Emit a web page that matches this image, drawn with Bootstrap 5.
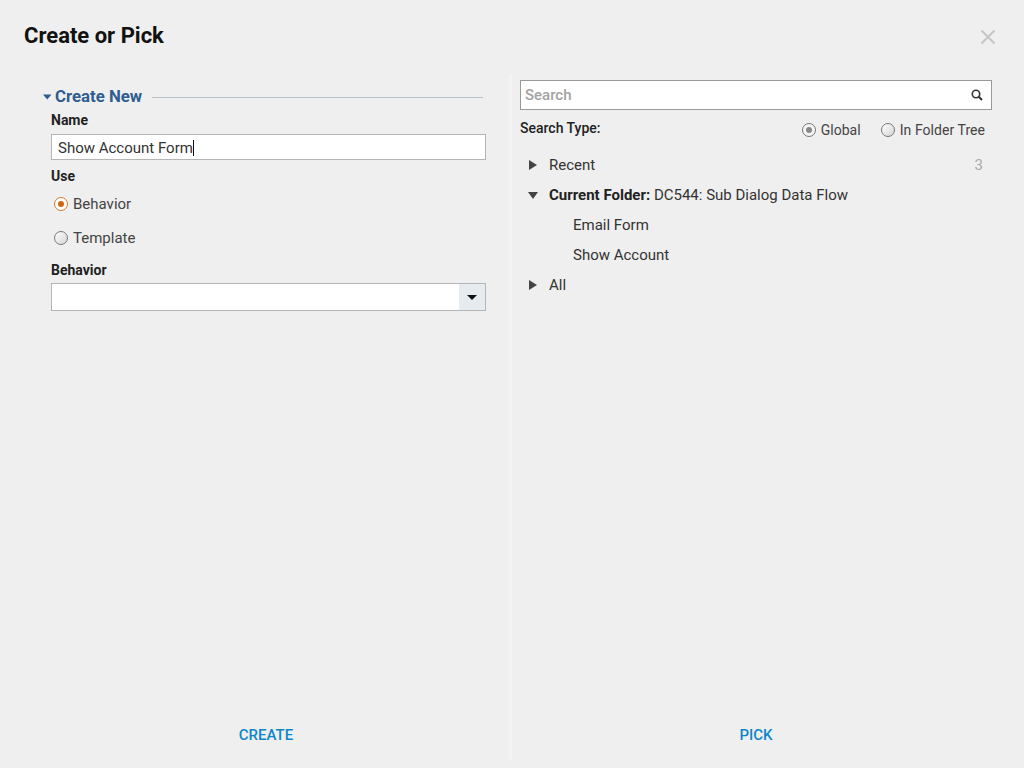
<!DOCTYPE html>
<html lang="en">
<head>
<meta charset="utf-8">
<title>Create or Pick</title>
<link rel="stylesheet" href="https://cdn.jsdelivr.net/npm/bootstrap@5.3.0/dist/css/bootstrap.min.css">
<style>
html,body{height:768px;overflow:hidden}
body{background:#efefef;font-family:Roboto,"Liberation Sans",sans-serif;font-size:14px;color:#333}
.dlg-head{height:74px;padding:23px 0 0 24px;position:relative}
.dlg-title{font-size:22px;font-weight:700;line-height:26px;color:#111;margin:0}
.dlg-close{position:absolute;left:980px;top:29px;width:16px;height:16px;display:block}
.dlg-body{height:686px}
.pane-left{width:509px;padding:13px 26px 0 43px}
.pane-split{width:3px;background:#f3f3f3}
.pane-right{width:512px;padding:6px 32px 0 8px}
.sec-head{height:20px;gap:3px}
.sec-title{font-size:16.800px;font-weight:700;color:#2f5d8f;line-height:18px;padding-bottom:2px;white-space:nowrap}
.sec-rule{height:1px;background:#bcc4cb;margin-left:7px}
.form-area{padding-left:8px;margin-right:-3px}
.fld-label{font-weight:700;font-size:14px;line-height:16px;color:#222;display:block}
.fld-first{margin-top:5px}
.fld-last{margin-top:7px}
.txt-box{height:26px;border:1px solid #b5b5b5;background:#fff;font-size:15px;line-height:24px;padding:1px 6px 0;color:#333;margin-top:6px}
.caret-bar{display:inline-block;width:1px;height:16px;background:#111;vertical-align:-3px}
.radio-row{height:34px;gap:5px;font-size:15px;color:#444;line-height:20px;padding-left:3px}
.radio-first{margin-top:3px}
.radio-dot{width:14px;height:14px;border-radius:50%;border:1px solid #777;background:linear-gradient(135deg,#fff,#d4d4d4);display:inline-flex;align-items:center;justify-content:center;flex:none}
.radio-dot.on-orange{border-color:#d9782a;background:#fff}
.radio-dot.on-orange::after{content:"";width:6px;height:6px;border-radius:50%;background:#d2660f}
.radio-dot.on-grey{background:#f4f4f4}
.radio-dot.on-grey::after{content:"";width:6px;height:6px;border-radius:50%;background:#888}
.combo{height:28px;border:1px solid #b5b5b5;background:#fff;margin-top:5px}
.combo-btn{width:26px;background:#e6ebef}
.tri-down{width:0;height:0;border-left:5px solid transparent;border-right:5px solid transparent;border-top:5px solid #111}
.search-box{height:30px;border:1px solid #999;background:#fff;padding:0 8px 0 4px}
.search-ph{font-weight:500;color:#a3a3a3;font-size:15px;line-height:28px}
.type-row{height:40px;padding-top:10px}
.type-label{font-size:14px;font-weight:500;color:#222;line-height:16px}
.type-opts{gap:20px;padding-right:7px}
.type-opt{gap:5px;font-size:14px;color:#444;line-height:20px;letter-spacing:.05px}
.tree-row{height:30px;font-size:15px;color:#333;line-height:20px}
.tree-arrow{width:29px;flex:none;padding-left:8px}
.ar-right{display:block;width:0;height:0;border-top:5px solid transparent;border-bottom:5px solid transparent;border-left:8px solid #444;margin-left:1px}
.ar-down{display:block;width:0;height:0;border-left:5.5px solid transparent;border-right:5.5px solid transparent;border-top:7px solid #444}
.tree-leaf{padding-left:53px}
.tree-count{color:#aaa;padding-right:9px}
.tree-strong{font-weight:700;color:#222}
.dlg-action{font-size:15px;font-weight:500;color:#0b87c9;text-decoration:none;line-height:16px}
.dlg-foot{height:0;position:relative}
.foot-link{position:absolute;top:-33px;transform:translateX(-50%)}
</style>
</head>
<body>
<div class="dlg-head">
  <h1 class="dlg-title">Create or Pick</h1>
  <svg class="dlg-close" viewBox="0 0 16 16" aria-label="Close"><path d="M1.500 1.500L14.500 14.500M14.500 1.500L1.500 14.500" stroke="#c6c6c6" stroke-width="2" fill="none"/></svg>
</div>
<div class="dlg-body d-flex">
  <div class="pane-left">
    <div class="sec-head d-flex align-items-center">
      <svg width="9" height="6" viewBox="0 0 9 6" class="flex-none"><path d="M0 .5H8.500L4.250 5.500Z" fill="#2f5d8f"/></svg>
      <span class="sec-title">Create New</span>
      <div class="sec-rule flex-grow-1"></div>
    </div>
    <div class="form-area">
      <label class="fld-label fld-first">Name</label>
      <div class="txt-box">Show Account Form<span class="caret-bar"></span></div>
      <label class="fld-label mt-2">Use</label>
      <div class="radio-row radio-first d-flex align-items-center"><span class="radio-dot on-orange"></span>Behavior</div>
      <div class="radio-row d-flex align-items-center"><span class="radio-dot"></span>Template</div>
      <label class="fld-label fld-last">Behavior</label>
      <div class="combo d-flex justify-content-end">
        <div class="combo-btn d-flex align-items-center justify-content-center"><span class="tri-down"></span></div>
      </div>
    </div>
  </div>
  <div class="pane-split"></div>
  <div class="pane-right">
    <div class="search-box d-flex align-items-center justify-content-between">
      <span class="search-ph">Search</span>
      <svg width="12" height="12" viewBox="0 0 12 12"><circle cx="5" cy="5" r="3.700" fill="none" stroke="#333" stroke-width="1.600"/><path d="M7.800 7.800L11 11" stroke="#333" stroke-width="2"/></svg>
    </div>
    <div class="type-row d-flex justify-content-between align-items-start">
      <span class="type-label">Search Type:</span>
      <div class="type-opts d-flex">
        <span class="type-opt d-flex align-items-center"><span class="radio-dot on-grey"></span>Global</span>
        <span class="type-opt d-flex align-items-center"><span class="radio-dot"></span>In Folder Tree</span>
      </div>
    </div>
    <div class="tree-row d-flex align-items-center"><span class="tree-arrow"><span class="ar-right"></span></span><span class="flex-grow-1">Recent</span><span class="tree-count">3</span></div>
    <div class="tree-row d-flex align-items-center"><span class="tree-arrow"><span class="ar-down"></span></span><span><span class="tree-strong">Current Folder:</span> DC544: Sub Dialog Data Flow</span></div>
    <div class="tree-row d-flex align-items-center tree-leaf">Email Form</div>
    <div class="tree-row d-flex align-items-center tree-leaf">Show Account</div>
    <div class="tree-row d-flex align-items-center"><span class="tree-arrow"><span class="ar-right"></span></span><span>All</span></div>
  </div>
</div>
<div class="dlg-foot">
  <a href="#" class="dlg-action foot-link" style="left:266px">CREATE</a>
  <a href="#" class="dlg-action foot-link" style="left:756px">PICK</a>
</div>
<script src="https://cdn.jsdelivr.net/npm/bootstrap@5.3.0/dist/js/bootstrap.bundle.min.js"></script>
</body>
</html>
